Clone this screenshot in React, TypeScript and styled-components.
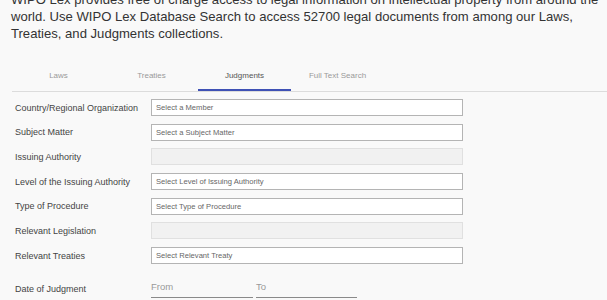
import styled, { createGlobalStyle } from 'styled-components';

const GlobalStyle = createGlobalStyle`
  html, body {
    margin: 0;
    padding: 0;
    background: #f9f9f9;
    font-family: "Liberation Sans", Arial, sans-serif;
    overflow: hidden;
  }
`;

const Page = styled.div`
  display: flex;
  flex-direction: column;
  width: 607px;
`;

const Intro = styled.p`
  margin: -9px 0 0;
  padding: 0 0 0 11px;
  font-size: 13.1px;
  line-height: 17px;
  color: #333;
  white-space: nowrap;
`;

const TabBar = styled.div`
  display: flex;
  margin: 16px 0 0 12px;
  border-bottom: 1px solid #dcdcdc;
`;

const Tab = styled.div<{ $active?: boolean }>`
  width: 93px;
  padding: 13px 0 8px;
  text-align: center;
  font-size: 8px;
  line-height: 10px;
  color: ${p => (p.$active ? '#555' : '#999')};
  border-bottom: 2px solid ${p => (p.$active ? '#3f51b5' : 'transparent')};
`;

const Form = styled.div`
  display: grid;
  grid-template-columns: 136px 312px;
  row-gap: 7.7px;
  align-items: center;
  margin: 7px 0 0 15px;
`;

const Label = styled.div<{ $spaced?: boolean }>`
  font-size: 9px;
  color: #444;
  margin-top: ${p => (p.$spaced ? '8px' : '0')};
`;

const Select = styled.div<{ $disabled?: boolean }>`
  box-sizing: border-box;
  height: 17px;
  padding: 0 4px;
  display: flex;
  align-items: center;
  font-size: 7.6px;
  color: #666;
  background: ${p => (p.$disabled ? '#f1f1f1' : '#fff')};
  border: 1px solid ${p => (p.$disabled ? '#e0e0e0' : '#b4b4b4')};
`;

const DateRange = styled.div`
  display: flex;
  gap: 3px;
  margin-top: 8px;
`;

const DateField = styled.div<{ $w: number }>`
  width: ${p => p.$w}px;
  box-sizing: border-box;
  padding-bottom: 3px;
  font-size: 9.5px;
  line-height: 14px;
  color: #999;
  border-bottom: 1px solid #8a8a8a;
`;

const rows: { label: string; placeholder?: string }[] = [
  { label: 'Country/Regional Organization', placeholder: 'Select a Member' },
  { label: 'Subject Matter', placeholder: 'Select a Subject Matter' },
  { label: 'Issuing Authority' },
  { label: 'Level of the Issuing Authority', placeholder: 'Select Level of Issuing Authority' },
  { label: 'Type of Procedure', placeholder: 'Select Type of Procedure' },
  { label: 'Relevant Legislation' },
  { label: 'Relevant Treaties', placeholder: 'Select Relevant Treaty' },
];

const tabs = ['Laws', 'Treaties', 'Judgments', 'Full Text Search'];

const App = () => {
  return (
    <Page>
      <GlobalStyle />
      <Intro>
        WIPO Lex provides free of charge access to legal information on intellectual property from around the
        <br />
        world. Use WIPO Lex Database Search to access 52700 legal documents from among our Laws,
        <br />
        Treaties, and Judgments collections.
      </Intro>

      <TabBar>
        {tabs.map(t => (
          <Tab key={t} $active={t === 'Judgments'}>{t}</Tab>
        ))}
      </TabBar>

      <Form>
        {rows.map(r => (
          <>
            <Label key={r.label}>{r.label}</Label>
            <Select $disabled={!r.placeholder}>{r.placeholder}</Select>
          </>
        ))}
        <Label $spaced>Date of Judgment</Label>
        <DateRange>
          <DateField $w={102}>From</DateField>
          <DateField $w={101}>To</DateField>
        </DateRange>
      </Form>
    </Page>
  );
};

export default App;
